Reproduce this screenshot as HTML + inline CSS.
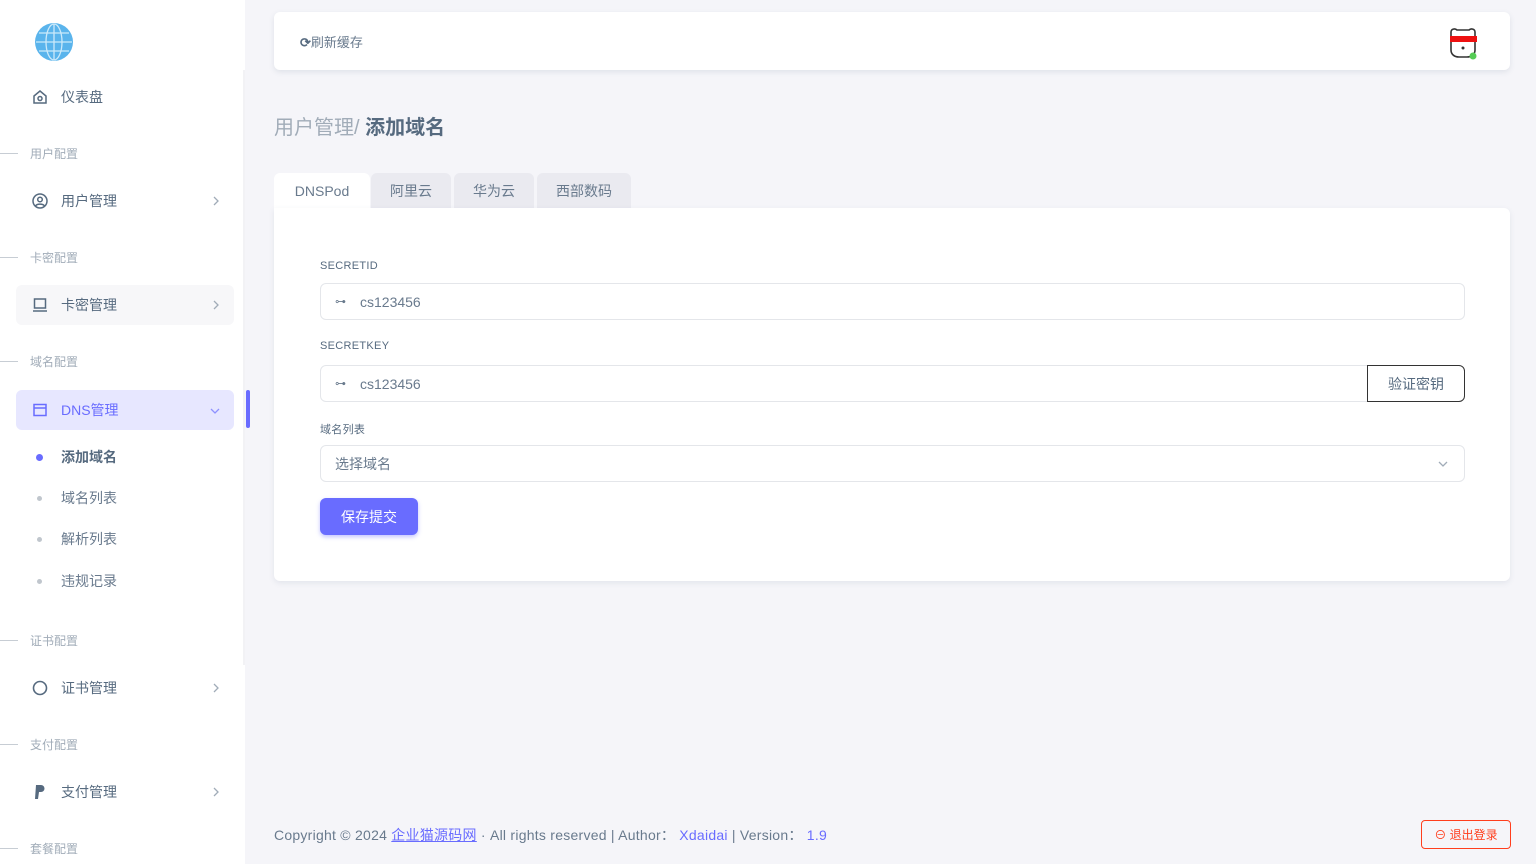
<!DOCTYPE html>
<html><head><meta charset="utf-8"><style>
*{box-sizing:border-box;margin:0;padding:0}
body{width:1536px;height:864px;background:#f5f5f9;font-family:"Liberation Sans","Noto Sans CJK SC",sans-serif;position:relative;overflow:hidden;color:#697a8d}
.sb{position:absolute;left:0;top:0;width:245px;height:864px;background:#fff}
.sbline{position:absolute;left:243px;top:70px;width:2px;height:595px;background:#f2f2f5}
.ind{position:absolute;left:246px;top:390px;width:4px;height:38px;background:#696cff;border-radius:2px}
.it{position:absolute;left:16px;width:218px;height:40px;border-radius:6px;font-size:14px;color:#566a7f;display:flex;align-items:center;padding-left:16px}
.it svg{margin-right:13px}
.it svg.ar{position:absolute;right:14px;top:12px;margin:0}
.hd{position:absolute;left:30px;font-size:12px;color:#a1acb8}
.hd:before{content:"";position:absolute;left:-30px;top:8px;width:18px;height:1px;background:#c7cdd4}
.sub{position:absolute;left:61px;font-size:14px;color:#697a8d}
.sub:before{content:"";position:absolute;left:-24px;top:8px;width:5px;height:5px;border-radius:50%;background:#c0c6cd}
.nav{position:absolute;left:274px;top:12px;width:1236px;height:58px;background:#fff;border-radius:6px;box-shadow:0 2px 6px rgba(67,89,113,.12)}
.card{position:absolute;left:274px;top:208px;width:1236px;height:373px;background:#fff;border-radius:0 6px 6px 6px;box-shadow:0 2px 6px rgba(67,89,113,.1)}
.tab{position:absolute;top:173px;height:35px;font-size:14px;color:#697a8d;background:#eaeaf0;display:flex;align-items:center;justify-content:center;border-radius:6px 6px 0 0}
.lbl{position:absolute;left:320px;font-size:11px;color:#566a7f;letter-spacing:.3px}
.inp{position:absolute;left:320px;height:37px;border:1px solid #e4e6ea;border-radius:6px;font-size:14px;color:#697a8d;display:flex;align-items:center;padding-left:14px}
</style></head><body>
<div class="sb"></div><div class="sbline"></div><div class="ind"></div>
<svg style="position:absolute;left:34px;top:22px" width="40" height="40" viewBox="0 0 40 40"><circle cx="20" cy="20" r="19" fill="#5ab4ec"/><g stroke="#cbe9fa" stroke-width="1.3" fill="none"><ellipse cx="20" cy="20" rx="8" ry="18"/><line x1="2" y1="20" x2="38" y2="20"/><line x1="5" y1="11" x2="35" y2="11"/><line x1="5" y1="29" x2="35" y2="29"/><line x1="20" y1="2" x2="20" y2="38"/></g></svg>
<div class="it" style="top:77px"><svg width="16" height="16" viewBox="0 0 16 16" fill="none" stroke="#566a7f" stroke-width="1.5"><path d="M2 7L8 2l6 5v7H2z"/><circle cx="8" cy="9.5" r="2"/></svg>仪表盘</div>
<div class="hd" style="top:145px">用户配置</div>
<div class="it" style="top:181px"><svg width="16" height="16" viewBox="0 0 16 16" fill="none" stroke="#566a7f" stroke-width="1.5"><circle cx="8" cy="8" r="7"/><circle cx="8" cy="6.5" r="2.3"/><path d="M3.5 13c1.5-2.5 7.5-2.5 9 0"/></svg>用户管理<svg class="ar" width="8" height="16" viewBox="0 0 8 16"><path d="M2 4l4 4-4 4" fill="none" stroke="#a1acb8" stroke-width="1.3"/></svg></div>
<div class="hd" style="top:249px">卡密配置</div>
<div class="it" style="top:285px;background:#f7f7f9"><svg width="16" height="16" viewBox="0 0 16 16" fill="none" stroke="#566a7f" stroke-width="1.5"><rect x="2.5" y="2" width="11" height="9"/><path d="M1 14h14"/></svg>卡密管理<svg class="ar" width="8" height="16" viewBox="0 0 8 16"><path d="M2 4l4 4-4 4" fill="none" stroke="#a1acb8" stroke-width="1.3"/></svg></div>
<div class="hd" style="top:353px">域名配置</div>
<div class="it" style="top:390px;background:#e7e7ff;color:#696cff"><svg width="16" height="16" viewBox="0 0 16 16" fill="none" stroke="#696cff" stroke-width="1.5"><rect x="2" y="2.5" width="12" height="11"/><path d="M2 6h12"/></svg>DNS管理<svg class="ar" width="10" height="16" viewBox="0 0 10 16"><path d="M1 7l4 4 4-4" fill="none" stroke="#8f91ff" stroke-width="1.3"/></svg></div>
<div class="sub" style="top:447px;color:#566a7f;font-weight:bold">添加域名</div>
<div class="sub" style="top:488px">域名列表</div>
<div class="sub" style="top:529px">解析列表</div>
<div class="sub" style="top:571px">违规记录</div>
<div style="position:absolute;left:36px;top:454px;width:7px;height:7px;border-radius:50%;background:#696cff"></div>
<div class="hd" style="top:632px">证书配置</div>
<div class="it" style="top:668px"><svg width="16" height="16" viewBox="0 0 16 16" fill="none" stroke="#566a7f" stroke-width="1.6"><circle cx="8" cy="8" r="6.5"/></svg>证书管理<svg class="ar" width="8" height="16" viewBox="0 0 8 16"><path d="M2 4l4 4-4 4" fill="none" stroke="#a1acb8" stroke-width="1.3"/></svg></div>
<div class="hd" style="top:736px">支付配置</div>
<div class="it" style="top:772px"><svg width="16" height="16" viewBox="0 0 16 16"><path d="M4 1h5a3.5 3.5 0 010 7H7l-1 7H3z" fill="#566a7f"/></svg>支付管理<svg class="ar" width="8" height="16" viewBox="0 0 8 16"><path d="M2 4l4 4-4 4" fill="none" stroke="#a1acb8" stroke-width="1.3"/></svg></div>
<div class="hd" style="top:840px">套餐配置</div>

<div class="nav"></div>
<div style="position:absolute;left:300px;top:32px;font-size:13px;color:#697a8d"><b style="color:#566a7f">⟳</b>刷新缓存</div>
<svg style="position:absolute;left:1446px;top:26px" width="36" height="36" viewBox="0 0 36 36"><path d="M5 6c0-3 4-4 6-2h12c2-2 6-1 6 2v18c0 4-3 7-8 7H13c-5 0-8-3-8-7z" fill="#fff" stroke="#333" stroke-width="1.6"/><rect x="4" y="10" width="27" height="6" fill="#e11"/><circle cx="17" cy="22" r="1.5" fill="#333"/><circle cx="27" cy="30" r="3.5" fill="#5c5"/></svg>
<div style="position:absolute;left:274px;top:111px;font-size:20px;color:#a1acb8">用户管理/ <b style="color:#566a7f">添加域名</b></div>
<div class="tab" style="left:274px;width:96px;background:#fff">DNSPod</div>
<div class="tab" style="left:371px;width:80px">阿里云</div>
<div class="tab" style="left:454px;width:80px">华为云</div>
<div class="tab" style="left:537px;width:94px">西部数码</div>
<div class="card"></div>
<div class="lbl" style="top:260px">SECRETID</div>
<div class="inp" style="top:283px;width:1145px"><span style="font-size:11px;margin-right:14px">⊶</span>cs123456</div>
<div class="lbl" style="top:340px">SECRETKEY</div>
<div class="inp" style="top:365px;width:1048px;border-radius:6px 0 0 6px"><span style="font-size:11px;margin-right:14px">⊶</span>cs123456</div>
<div style="position:absolute;left:1367px;top:365px;width:98px;height:37px;border:1px solid #333;border-radius:0 6px 6px 0;font-size:14px;color:#566a7f;display:flex;align-items:center;justify-content:center">验证密钥</div>
<div class="lbl" style="top:421px">域名列表</div>
<div class="inp" style="top:445px;width:1145px">选择域名<svg style="position:absolute;right:16px;top:14px" width="10" height="8" viewBox="0 0 10 8"><path d="M1 2l4 4 4-4" fill="none" stroke="#a1acb8" stroke-width="1.3"/></svg></div>
<div style="position:absolute;left:320px;top:498px;width:98px;height:37px;background:#696cff;border-radius:6px;box-shadow:0 2px 4px rgba(105,108,255,.4);color:#fff;font-size:14px;display:flex;align-items:center;justify-content:center">保存提交</div>
<div style="position:absolute;left:274px;top:825px;font-size:14px;letter-spacing:.25px;color:#697a8d">Copyright © 2024 <span style="color:#696cff;text-decoration:underline">企业猫源码网</span> · All rights reserved | Author：<span style="color:#696cff"> Xdaidai</span> | Version：<span style="color:#696cff"> 1.9</span></div>
<div style="position:absolute;left:1421px;top:820px;width:90px;height:29px;border:1px solid #ff3e1d;border-radius:4px;color:#ff3e1d;font-size:12px;display:flex;align-items:center;justify-content:center">⊖ 退出登录</div>
</body></html>
